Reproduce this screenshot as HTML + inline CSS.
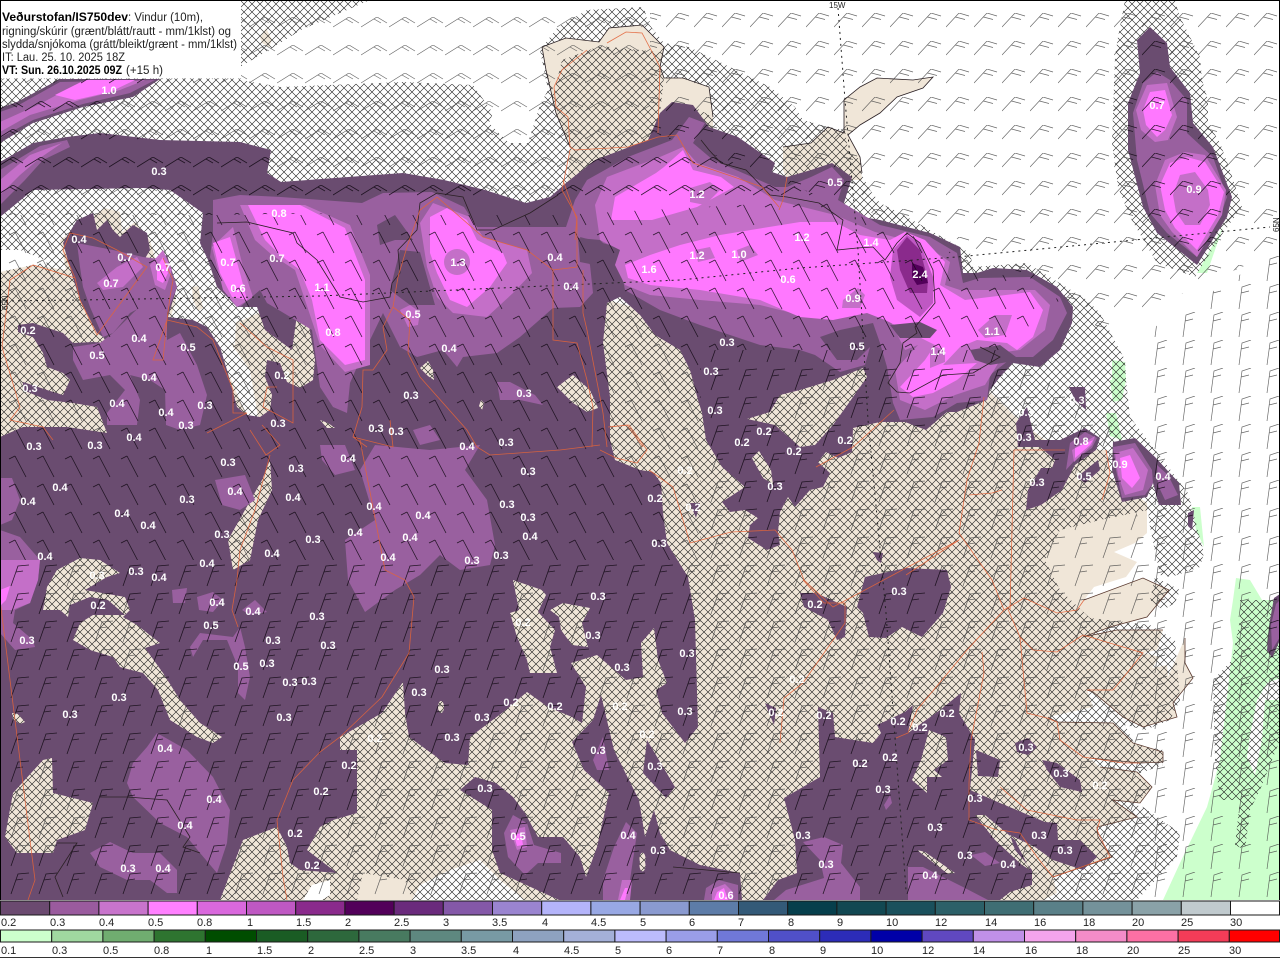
<!DOCTYPE html>
<html><head><meta charset="utf-8"><title>Veðurstofan</title>
<style>html,body{margin:0;padding:0;background:#fff;width:1280px;height:958px;overflow:hidden}svg{display:block}text{font-family:"Liberation Sans",sans-serif}</style></head>
<body>
<svg width="1280" height="958" viewBox="0 0 1280 958" xmlns="http://www.w3.org/2000/svg">
<defs>
<pattern id="h" width="8" height="8" patternUnits="userSpaceOnUse"><path d="M0 0L8 8M8 0L0 8" stroke="#1a1a1a" stroke-width=".6" fill="none"/></pattern>
<pattern id="bA" x="22" y="13" width="28" height="28" patternUnits="userSpaceOnUse"><path d="M0 14L13 0L23 3M9.500 4L19 6.500" stroke="#444" stroke-width=".7" fill="none"/></pattern>
<pattern id="bB" x="25" y="17" width="28" height="28" patternUnits="userSpaceOnUse"><path d="M0 10L16 0L26 6M13 2L20 6" stroke="#444" stroke-width=".7" fill="none"/></pattern>
<pattern id="bC" x="8" y="6" width="28" height="28" patternUnits="userSpaceOnUse"><path d="M7 2L18 23M7 2L1 5" stroke="#444" stroke-width=".7" fill="none"/></pattern>
<pattern id="bE" x="10" y="4" width="28" height="28" patternUnits="userSpaceOnUse"><path d="M1 22L8 2L19 1M6 8L13 7" stroke="#444" stroke-width=".7" fill="none"/></pattern>
<pattern id="bG" x="4" y="4" width="28" height="28" patternUnits="userSpaceOnUse"><path d="M3 25L6 3L15 0M5 9L13 7" stroke="#444" stroke-width=".7" fill="none"/></pattern>
<pattern id="dA" x="22" y="13" width="28" height="28" patternUnits="userSpaceOnUse"><path d="M0 14L13 0L23 3M9.500 4L19 6.500" stroke="#120a14" stroke-width=".8" fill="none"/></pattern>
<pattern id="dB" x="25" y="17" width="28" height="28" patternUnits="userSpaceOnUse"><path d="M0 10L16 0L26 6M13 2L20 6" stroke="#120a14" stroke-width=".8" fill="none"/></pattern>
<pattern id="dC" x="8" y="6" width="28" height="28" patternUnits="userSpaceOnUse"><path d="M7 2L18 23M7 2L1 5" stroke="#120a14" stroke-width=".8" fill="none"/></pattern>
<pattern id="dE" x="10" y="4" width="28" height="28" patternUnits="userSpaceOnUse"><path d="M1 22L8 2L19 1M6 8L13 7" stroke="#120a14" stroke-width=".8" fill="none"/></pattern>
<pattern id="dG" x="4" y="4" width="28" height="28" patternUnits="userSpaceOnUse"><path d="M3 25L6 3L15 0M5 9L13 7" stroke="#120a14" stroke-width=".8" fill="none"/></pattern>
<path id="pu" fill-rule="evenodd" clip-rule="evenodd" d="M0 162L33 143L67 137L100 133L160 140L240 142L271 150L267 173L281 182L403 173L444 180L485 190L526 203L550 197L566 183L595 160L648 140L660 113L672 102L693 105L709 127L738 137L775 163L772 172L787 177L811 170L832 163L852 177L844 203L840 213L880 220L930 233L960 247L963 273L977 273L993 268L1027 270L1057 287L1073 307L1072 323L1060 350L1040 367L1013 363L1000 377L990 390L987 400L957 412L947 412L926 430L905 422L880 422L853 428L852 452L838 458L826 452L818 462L830 473L823 487L810 490L795 507L788 497L780 512L778 532L780 545L767 550L748 538L750 525L758 518L745 510L730 512L722 502L745 487L722 467L706 440L702 413L698 400L690 370L680 350L655 335L640 315L620 297L607 303L603 343L610 397L610 440L615 460L640 470L653 472L661 483L663 513L667 543L688 577L695 620L698 727L685 743L662 713L656 690L667 683L658 660L654 628L641 643L643 677L626 680L597 655L571 663L586 687L582 723L572 717L548 707L527 692L502 713L470 737L468 765L445 763L409 737L405 713L403 682L382 713L340 737L340 750L357 750L357 813L333 820L320 827L307 850L337 873L300 870L290 863L287 847L277 827L243 840L220 900L0 900L0 437L23 427L67 427L107 433L97 407L73 403L47 400L23 390L23 382L47 390L63 395L70 380L63 373L47 367L43 353L33 337L18 332L18 325L33 323L63 333L73 343L93 342L107 343L103 337L97 333L80 300L73 278L63 243L77 220L93 213L97 230L107 220L113 230L120 237L133 225L147 233L150 250L143 262L167 255L177 287L168 317L193 320L207 327L220 347L227 370L237 407L247 415L260 417L270 410L272 395L265 377L267 360L280 363L287 382L300 388L313 380L315 360L307 315L297 315L292 350L265 330L257 307L237 307L217 287L208 260L200 243L203 213L170 190L143 188L33 190L0 217Z
M47 587L57 570L80 558L100 560L120 573L107 577L85 590L125 597L130 610L123 617L137 625L160 643L145 648L163 673L180 700L200 723L222 737L213 743L197 737L170 720L158 690L143 673L120 667L113 657L90 650L73 640L80 623L93 615L125 615L108 600L90 597L70 605L68 617L60 610L43 610Z
M13 793L43 760L52 758L53 793L93 803L85 830L57 840L53 853L17 853L5 837Z
M12 713L18 714L25 722L20 724L13 719Z
M233 570L228 540L245 510L262 480L270 460L272 490L258 520L250 560Z
M420 368L428 361L433 370L434 380L428 376Z
M557 387L573 375L590 390L598 408L587 412L573 403Z
M481 400L484 403L482 410L479 406Z
M513 580L542 590L546 595L538 612L555 630L550 647L557 673L530 673L527 660L517 637L510 613L519 610Z
M550 610L563 603L590 608L582 623L588 647L572 645L561 630L559 617Z
M438 707A3 6 0 1 0 444 707A3 6 0 1 0 438 707Z
M320 420L328 423L335 428L327 428Z
M747 419L770 412L780 395L800 390L833 380L863 368L867 377L853 397L833 425L815 445L800 447L775 425Z
M752 458L759 451L771 470L773 484L763 478Z
M601 695L614 750L639 800L645 837L654 810L660 833L670 850L700 865L740 873L742 900H559L500 873L492 850L492 810L460 790L475 777L496 783L513 797L525 813L538 837L563 837L580 857L586 877L597 847L609 793L584 770L572 742L593 720Z
M640 862A3 6 0 1 0 645 862A3 6 0 1 0 640 862Z
M647 740L675 787L666 798L643 773Z
M763 900L778 880L797 873L795 840L784 798L820 777L818 707L833 713L835 737L873 743L881 733L877 725L905 712L913 705L908 733L940 710L961 693L959 713L975 740L970 790L1000 803L1045 822L1057 823L1058 840L1080 840L1097 857L1083 870L1053 860L1035 847L1010 835L1015 850L1032 870L1032 885L1010 892L1000 900Z
M921 760L929 730L946 737L948 760L934 770L942 777L927 777L927 793L912 780Z
M976 750L1000 760L998 777L978 776Z
M917 850L925 852L955 873L948 874Z
M975 815L985 815L1015 840L1030 870L1022 865L995 840Z
M865 577L906 568L947 570L951 587L943 613L922 637L902 627L886 638L869 637L863 613L857 607Z
M800 593L816 593L847 607L845 637L837 640L828 620L804 607Z
M873 552L883 553L881 563L877 560Z
M690 503L700 503L696 518Z
M765 703L776 708L774 725Z
M1015 743L1028 738L1037 747L1028 755L1017 752Z
M1042 760L1057 763L1080 780L1082 792L1060 787L1047 770Z
M1016 423L1027 407L1030 420L1035 440L1060 440L1085 428L1100 438L1096 450L1075 465L1062 490L1041 505L1026 510L1028 490L1041 468L1052 468L1055 460L1040 447L1018 447Z
M1077 477L1098 460L1100 470L1085 483Z
M1113 442L1135 438L1155 457L1179 483L1181 505L1159 505L1153 483L1147 497L1122 502L1112 470Z
M1069 387L1085 387L1086 410L1075 400Z
M1188 513L1194 510L1192 530L1188 526Z
M1150 27L1167 43L1170 67L1190 93L1193 123L1213 147L1232 197L1227 217L1197 265L1157 233L1143 207L1128 150L1128 103L1140 73L1137 40Z
M0 108L17 102L60 79H160L133 97L83 107L33 123L0 143Z
M1274 598L1280 594V640L1272 658L1267 650L1270 620Z"/>
<clipPath id="cp"><use href="#pu"/></clipPath>
</defs>
<rect width="1280" height="958" fill="#fff"/>
<!-- green -->
<path d="M1230 620L1233 600L1236 578L1250 580L1262 600L1280 600V900H1163L1180 863L1207 807L1220 760L1233 643Z" fill="#ccffcc"/>
<path d="M1247 757L1250 735L1257 700L1267 683L1280 678V700L1265 700L1262 740L1255 775Z" fill="#fff"/>
<path d="M1110 380H1126L1122 400L1113 402ZM1106 413L1116 413L1122 440L1110 436ZM1192 507H1200L1204 547L1196 530ZM1197 273L1223 227L1215 250L1207 273ZM1112 360L1125 362L1126 382L1112 382Z" fill="#ccffcc"/>
<!-- land -->
<path d="M0 272L33 265L66 270L60 240L105 208L120 212L122 232L135 222L150 240L155 258L170 262L176 300L170 320L207 327L235 345L236 322L243 320L265 310L310 300L420 300L607 300L720 330L900 360L988 390L1020 421L1057 449L1106 450L1110 477L1147 503L1147 533L1135 543L1114 552L1137 562L1126 577L1094 587L1084 600L1143 578L1169 590L1147 617L1110 627L1083 637L1117 630L1163 630L1157 650L1143 653L1160 657L1152 668L1167 665L1168 677L1185 638L1185 663L1193 678L1173 703L1177 717L1143 727L1123 717L1093 692L1087 690L1093 707L1048 717L1057 722L1113 723L1133 743L1163 752L1163 762L1140 763L1090 758L1100 767L1137 772L1152 787L1140 803L1113 800L1137 817L1097 827L1098 837L1112 857L1053 877L1057 893L1043 900L0 900Z" fill="#f0e6d8"/>
<path d="M542 47L566 38L599 42L609 28L642 25L664 47L660 67L664 78L683 78L709 87L713 117L713 150L566 200L570 147L556 113L546 70Z" fill="#f0e6d8"/>
<path d="M783 147L811 143L828 127L844 133L844 100L860 87L877 78L913 80L933 77L923 88L897 97L880 113L860 125L848 135L860 157L862 180L787 180L783 170Z" fill="#f0e6d8"/>
<path d="M192 287L198 286L203 308L198 311L193 300ZM260 38L266 28L272 40L269 47L262 43Z" fill="#f0e6d8"/>
<!-- sea inside land -->
<path d="M170 262L200 230L210 250L236 318L232 345L250 370L258 417L247 417L227 370L220 347L207 327L193 320L170 320L176 300Z" fill="#fff"/>
<path d="M192 287L198 286L203 308L198 311L193 300Z" fill="#f0e6d8"/>
<path d="M412 900L420 885L450 870L480 860L500 880L525 900Z" fill="#fff"/>
<!-- hatch -->
<path d="M240 0H370L301 30L269 50L240 67Z" fill="url(#h)"/>
<path d="M0 78H240V80L281 87L403 82L473 85L493 113L489 123L509 143L528 143L540 105L548 90L540 50L558 27L587 10L644 7L648 23L664 43L689 47L730 67L770 87L795 107L803 120L828 127L845 130L848 150L860 160L862 175L870 190L880 203L900 213L970 253L973 267L1027 263L1087 300L1100 313L1125 360L1126 380L1130 417L1188 493L1204 553L1200 567L1171 577L1160 575L1150 527L1148 510L1100 520L1060 530L1045 560L1060 590L1090 618L1150 625L1175 640L1180 700L1170 720L1145 730L1125 725L1135 745L1163 750L1163 765L1135 775L1152 787L1135 805L1143 807L1180 833L1177 857L1137 900H525L412 900L405 880L363 873L357 900H0V272L33 265L50 262L20 250L0 250Z" fill="url(#h)"/>
<path d="M1155 577L1180 590L1175 603L1163 610L1150 600Z" fill="url(#h)"/>
<path d="M1125 0H1175L1180 17L1200 57L1202 80L1208 100L1208 123L1220 143L1230 170L1242 207L1223 233L1195 277L1157 263L1130 217L1118 187L1112 143L1115 57L1118 37Z" fill="url(#h)"/>
<path d="M1213 680L1232 660L1240 620L1240 600H1280V740L1260 790L1250 810L1245 850L1235 845L1240 800L1220 800L1215 760Z" fill="url(#h)"/>
<path d="M303 900L312 885L330 880L330 895L322 900Z" fill="#fff"/>
<path d="M542 47L566 38L599 42L609 28L642 25L664 47L660 52L600 46L562 60L554 92L546 70ZM664 78L683 78L709 87L713 117L690 105L672 102L660 113Z" fill="#f0e6d8"/>
<!-- gray barbs -->
<g opacity=".8">
<path d="M650 0H1280V250L1100 330L1070 300L960 240L830 200L650 130Z" fill="url(#bA)"/>
<path d="M240 0H650V130L830 200L560 210L200 215L0 215V78H240Z" fill="url(#bB)"/>
<path d="M0 215H560L830 200L1060 300L1000 350H700V560H0Z" fill="url(#bC)"/>
<path d="M0 560H700V350H1000L1110 420L1150 560V900H0Z" fill="url(#bE)"/>
<path d="M1150 330L1280 250V900H1150Z" fill="url(#bG)"/>
</g>
<!-- base purple -->
<use href="#pu" fill="#6a4c70"/>
<!-- mid -->
<g fill="#99609f">
<path d="M213 200L240 195L281 197L362 203L383 193L432 192L464 207L477 227L566 227L575 200L587 180L628 157L672 140L689 117L705 123L693 143L713 160L775 187L787 187L811 177L832 167L844 180L838 200L880 225L930 237L957 253L963 283L980 278L1030 277L1060 297L1067 313L1053 340L1033 357L1013 357L990 375L987 400L957 403L933 417L900 420L893 403L887 367L880 343L873 323L840 330L820 337L837 360L857 360L870 347L865 365L840 372L815 355L800 350L760 345L700 325L660 310L625 290L620 265L640 240L610 245L580 237L590 265L593 293L580 307L553 308L520 337L497 353L463 357L457 367L443 350L417 357L400 347L383 313L357 367L350 383L347 413L333 407L320 387L312 330L267 303L260 290L240 307L220 280L210 257L213 233Z"/>
<path d="M77 243L113 250L143 257L167 260L177 287L167 313L160 297L130 313L113 333L103 337L90 307L83 287L80 267Z"/>
<path d="M73 347L100 343L113 333L133 313L150 297L167 300L167 340L180 333L197 365L207 395L200 425L180 430L166 425L165 390L150 380L130 375L140 400L137 425L107 425L107 413L125 390L110 375L83 380L73 360Z"/>
<path d="M375 445L430 450L480 445L465 470L487 500L495 545L490 565L460 570L440 555L420 575L395 590L365 612L348 580L345 540L375 520L360 470Z"/>
<path d="M320 445L345 445L355 470L335 475L322 460ZM215 480L245 475L255 500L240 510L222 505ZM497 382L510 382L535 395L543 405L520 400L500 400ZM460 550L478 552L482 566L464 566ZM413 430L430 425L440 440L420 445Z"/>
<path d="M0 478L12 478L20 500L12 520L0 525ZM0 530L20 537L40 560L38 580L30 603L15 610L13 623L33 640L35 647L15 650L0 633Z"/>
<path d="M172 590L187 588L185 603L173 603ZM197 597L213 592L223 600L213 612L199 610ZM242 610L255 600L267 612L250 615ZM190 647L200 633L233 637L240 627L245 647L250 677L245 700L238 693L238 667L227 640L203 640L193 657Z"/>
<path d="M147 747L157 733L187 750L213 777L230 810L227 843L217 873L200 853L187 837L160 823L133 797L127 783L133 763Z"/>
<path d="M90 853L110 842L133 853L160 853L177 870L177 893L167 893L150 880L127 880L100 867Z"/>
<path d="M593 760L603 737L609 770L597 770ZM504 833L513 815L527 823L534 845L561 853L561 863L538 863L525 875L508 857ZM614 847L626 822L637 833L630 880L630 900L603 900L603 880ZM706 888L719 880L738 885L738 900H704ZM803 842L824 837L843 845L841 863L860 887L860 900H774L786 890L824 878L820 860ZM908 867L923 867L963 887L988 900H908ZM971 855L985 852L1000 863L985 866ZM884 805L890 795L892 803L886 810Z"/>
<path d="M0 112L17 106L60 82L155 80L130 93L83 104L33 120L0 138ZM0 170L40 146L67 140L70 147L43 160L25 180L0 205Z"/>
<path d="M1133 113L1143 83L1157 72L1170 80L1187 100L1187 133L1213 157L1227 197L1220 217L1197 257L1167 233L1150 213L1137 160Z"/>
<path d="M1070 443L1085 432L1097 438L1092 448L1075 460L1066 470ZM1113 447L1135 443L1152 470L1153 483L1145 495L1122 498L1116 470ZM1157 465L1168 475L1178 495L1165 500L1158 485Z"/>
<path d="M1276 604L1280 600V637L1272 650L1271 625Z"/>
</g>
<!-- light -->
<g fill="#c46fc8">
<path d="M212 247L233 227L243 267L253 297L237 307L223 290Z"/>
<path d="M240 205L305 205L350 225L370 275L370 365L345 372L320 345L305 300L295 270L272 255L255 240Z"/>
<path d="M420 223L433 203L470 217L483 237L527 250L532 273L513 293L487 317L453 313L437 297L427 267Z"/>
<path d="M400 310L410 305L420 312L418 325L408 327Z"/>
<path d="M595 205L607 177L660 157L683 147L697 163L738 177L775 200L835 215L875 232L925 245L950 262L945 285L960 290L1035 290L1050 305L1045 330L1020 350L1005 352L985 385L955 395L925 410L900 400L895 370L918 345L905 350L890 320L880 300L833 320L800 315L760 305L700 300L650 295L625 285L615 265L620 250L600 240Z"/>
<path d="M97 283L117 267L137 257L143 267L123 287L103 290Z"/>
<path d="M150 265L163 250L172 270L165 290L155 285Z"/>
<path d="M0 560H40L38 580L30 603L12 610L0 610ZM510 830L525 827L527 847L517 850ZM622 880L632 880L630 900H618ZM712 889L725 884L733 892L733 900H712Z"/>
<path d="M1136 110L1147 85L1167 83L1177 117L1168 140L1155 142L1141 130ZM1155 185L1165 160L1185 152L1205 155L1226 190L1222 215L1197 257L1172 232L1160 215Z"/>
<path d="M0 122L40 104L75 85L145 80L120 90L80 100L30 115L0 132ZM0 180L30 155L62 143L40 158L20 175L0 195Z"/>
<path d="M1072 450L1095 436L1092 445L1074 462ZM1115 453L1133 448L1148 470L1143 490L1125 495L1118 475Z"/>
</g>
<!-- bright -->
<g fill="#ff78ff">
<path d="M213 243L230 237L240 273L247 300L232 297L220 273Z"/>
<path d="M248 205L300 205L345 228L365 280L365 360L345 365L320 340L312 300L300 270L280 255L265 240Z"/>
<path d="M430 217L447 208L467 220L477 240L503 253L507 263L497 277L490 287L467 307L450 300L437 273L430 253Z"/>
<path d="M664 167L683 150L693 170L721 177L734 187L697 207L652 220L611 220L615 197L656 173Z"/>
<path d="M625 265L650 255L680 245L720 235L800 222L835 222L860 235L890 240L905 232L925 240L945 262L940 285L965 300L1030 292L1043 310L1033 337L1017 350L1007 343L977 340L960 347L943 365L977 363L957 380L933 393L913 397L900 387L925 360L935 345L885 320L867 313L833 320L800 317L760 300L700 290L650 285L628 278Z"/>
<path d="M157 267L163 257L168 273L163 283L157 280Z"/>
<path d="M0 590L10 586L6 600L0 606ZM514 835L521 833L523 845L517 846Z"/>
<path d="M1143 110L1150 92L1165 90L1172 115L1165 130L1157 137L1146 125ZM1160 185L1170 163L1187 157L1205 162L1224 192L1218 215L1197 250L1175 228L1165 210Z"/>
<path d="M55 95L85 80L135 80L110 92L75 100ZM1075 448L1093 440L1090 445L1075 458ZM1120 458L1130 455L1140 478L1132 488L1122 478ZM625 888L628 888L625 900H620ZM717 892L724 888L728 900H714Z"/>
</g>
<!-- inner spots -->
<g fill="#c46fc8">
<circle cx="457" cy="262" r="13"/>
<path d="M690 188L710 182L720 190L705 205L690 202ZM737 250L750 245L758 255L740 262ZM843 300L858 288L865 295L860 308L842 308ZM1173 195L1180 175L1195 172L1208 190L1210 205L1200 225L1185 225L1176 212ZM978 330L995 315L1012 315L1005 335L985 338ZM930 345L945 350L945 362L930 368ZM695 250L710 247L715 258L698 262Z"/>
</g>
<g fill="#6a4c70">
<path d="M377 225L395 215L413 240L395 240L380 245ZM400 250L420 252L435 305L410 305L390 290ZM890 325L920 322L937 330L930 338L900 338ZM970 350L1000 345L1020 360L990 365L975 360Z"/>
<path d="M578 238L600 240L608 248L595 265L580 262Z"/>
</g>
<path d="M893 250L907 235L920 243L933 277L933 303L920 317L897 300L890 277Z" fill="#bf58c3"/>
<path d="M897 250L907 237L920 250L928 280L927 293L910 293L900 270Z" fill="#8a2a8c"/>
<path d="M912 263L923 267L928 283L917 285L912 277Z" fill="#52005a"/>
<!-- dark barbs on precipitation -->
<g clip-path="url(#cp)" opacity=".85">
<path d="M650 0H1280V250L1100 330L1070 300L960 240L830 200L650 130Z" fill="url(#dA)"/>
<path d="M240 0H650V130L830 200L560 210L200 215L0 215V78H240Z" fill="url(#dB)"/>
<path d="M0 215H560L830 200L1060 300L1000 350H700V560H0Z" fill="url(#dC)"/>
<path d="M0 560H700V350H1000L1110 420L1150 560V900H0Z" fill="url(#dE)"/>
<path d="M1150 330L1280 250V900H1150Z" fill="url(#dG)"/>
</g>
<!-- dotted graticule -->
<g fill="none" stroke="#222" stroke-width="1" stroke-dasharray="2 4">
<path d="M0 301L80 300L320 296L680 280L800 268L957 257L1270 227"/>
<path d="M838 8L845 100L858 250L868 420L886 613L906 890"/>
</g>
<!-- coast -->
<g fill="none" stroke="#2a2024" stroke-width=".8">
<path d="M542 47L566 38L599 42L609 28L642 25L664 47L660 67L664 78L683 78L709 87L713 117M542 47L546 70L556 113L570 147"/>
<path d="M783 147L811 143L828 127L844 133L844 100L860 87L877 78L913 80L933 77L923 88L897 97L880 113L860 125L848 135L860 157L862 173"/>
<path d="M217 223L247 222L293 233L297 243L317 260L340 297L363 302L390 297L392 283L400 273L398 250L417 230L420 203L437 193L463 197L477 230L493 230L530 213L558 195"/>
<path d="M701 140L709 150L721 163L746 170L770 195L787 197L819 203L843 220L837 250L857 248L873 247L885 260L897 243L907 233L920 243L933 270L935 303L915 327L917 333L903 343L900 363L888 383L897 392L910 393L943 375L973 373L1000 357L980 347"/>
<path d="M100 797L127 797L167 800L190 837L183 847L200 853M57 843L77 843L55 877L63 897M673 867L740 873"/>
<path d="M1083 637L1117 630L1163 630M1084 600L1143 578L1169 590L1147 617L1110 627L1083 637M1185 638L1185 663L1193 678L1173 703L1177 717L1143 727L1123 717L1093 692L1087 690M1048 717L1057 722L1113 723L1133 743L1163 752L1163 762L1140 763L1090 758M1100 767L1137 772L1152 787L1140 803L1113 800L1137 817L1097 827L1098 837L1112 857L1053 877" stroke="#5a3a30"/>
</g>
<!-- roads -->
<g fill="none" stroke="#e2643a" stroke-width=".8" opacity=".9">
<path d="M607 43L626 32L642 33L660 67L658 133M587 50L562 70L554 87L556 107L568 117L570 147L575 150L628 147L658 137L677 135L693 163L734 177L762 187L779 207M787 177L783 200L779 210M570 150L562 190L577 217L575 240"/>
<path d="M563 180L577 220L577 267L553 270L527 250L483 237L437 197L420 210L407 247L398 277L393 307L383 327L387 350L373 370L363 370L362 407L353 437L367 447M393 307L410 320L408 353L420 377L467 430L477 447L490 455L560 450L600 445M390 420L393 447L353 437M553 270L553 340L577 343L587 380L593 407L592 447M583 270L583 313L587 330L603 413L607 447M610 427L627 425L643 447"/>
<path d="M360 440L385 570L405 580L414 597L409 653L382 697L340 737L320 752L293 780L277 820L283 877L287 900M270 455L255 510L240 550L237 580L232 610L238 627"/>
<path d="M2 347L10 280L33 265L75 278L80 300L97 335L147 267L117 250L93 238L70 233L63 250L75 278M167 320L170 297L173 280L163 258M167 320L153 360L163 360L167 320L197 327L213 340L233 390L233 413L247 413L207 433M2 347L20 407L10 420L43 427L53 440M0 600L35 880L28 900M240 323L267 347L293 360L293 423L263 407L267 387L277 387M250 430L266 455L280 445L262 425"/>
<path d="M608 427L629 425L647 450L637 463L616 458L600 450M649 470L673 487L690 543L731 532L775 530L792 550L804 580L833 607L865 590L906 568L959 540M906 575L959 540M894 410L853 447L816 467M984 397L979 443L967 480L959 533L992 580L1000 600L1004 610L967 650L917 710L908 733L896 738M1014 450L1010 610M1014 450L1065 450M1106 450L1110 473L1102 500M969 495L992 493L1002 490M1004 610L1024 598L1057 613L1077 610L1084 600"/>
<path d="M1007 607L1020 637L1033 650L1057 652L1083 635L1143 653L1123 678L1113 690L1087 690M1020 637L1027 713L1047 718L1057 722L1060 740L1083 757L1123 763L1140 763M1000 787L1027 810L1077 820L1100 820L1097 830L1110 857L1053 877L1037 857L1020 833L1000 830M803 580L824 603L845 603L845 623L803 683L784 698L780 743M982 652L984 673L971 740L969 783L969 820L997 830"/>
</g>
<!-- map labels -->
<g fill="#fff" font-size="11" font-weight="700" text-anchor="middle">
<text x="109" y="94">1.0</text><text x="159" y="175">0.3</text><text x="279" y="217">0.8</text><text x="79" y="243">0.4</text><text x="125" y="261">0.7</text><text x="111" y="287">0.7</text><text x="163" y="271">0.7</text><text x="228" y="266">0.7</text><text x="277" y="262">0.7</text><text x="238" y="292">0.6</text><text x="322" y="291">1.1</text><text x="333" y="336">0.8</text><text x="458" y="266">1.3</text><text x="413" y="318">0.5</text><text x="449" y="352">0.4</text><text x="555" y="261">0.4</text><text x="571" y="290">0.4</text><text x="649" y="273">1.6</text><text x="697" y="198">1.2</text><text x="697" y="259">1.2</text><text x="739" y="258">1.0</text><text x="802" y="241">1.2</text><text x="871" y="246">1.4</text><text x="835" y="186">0.5</text><text x="920" y="278">2.4</text><text x="788" y="283">0.6</text><text x="853" y="302">0.9</text><text x="992" y="335">1.1</text><text x="857" y="350">0.5</text><text x="938" y="355">1.4</text><text x="727" y="346">0.3</text><text x="711" y="375">0.3</text><text x="715" y="414">0.3</text><text x="742" y="446">0.2</text><text x="764" y="435">0.2</text><text x="794" y="455">0.2</text><text x="845" y="444">0.2</text><text x="775" y="490">0.3</text><text x="1157" y="109">0.7</text><text x="1194" y="193">0.9</text>
<text x="28" y="334">0.2</text><text x="97" y="359">0.5</text><text x="139" y="342">0.4</text><text x="188" y="351">0.5</text><text x="30" y="392">0.3</text><text x="149" y="381">0.4</text><text x="117" y="407">0.4</text><text x="166" y="416">0.4</text><text x="205" y="409">0.3</text><text x="186" y="429">0.3</text><text x="134" y="441">0.4</text><text x="34" y="450">0.3</text><text x="95" y="449">0.3</text><text x="228" y="466">0.3</text><text x="282" y="379">0.2</text><text x="278" y="427">0.3</text><text x="411" y="399">0.3</text><text x="376" y="432">0.3</text><text x="396" y="435">0.3</text><text x="348" y="462">0.4</text><text x="296" y="472">0.3</text><text x="467" y="450">0.4</text><text x="506" y="446">0.3</text><text x="524" y="397">0.3</text><text x="528" y="475">0.3</text><text x="60" y="491">0.4</text><text x="28" y="505">0.4</text><text x="187" y="503">0.3</text><text x="235" y="495">0.4</text><text x="293" y="501">0.4</text><text x="374" y="510">0.4</text><text x="423" y="519">0.4</text><text x="507" y="508">0.3</text><text x="528" y="521">0.3</text><text x="122" y="517">0.4</text><text x="148" y="529">0.4</text><text x="222" y="538">0.3</text><text x="313" y="543">0.3</text><text x="355" y="536">0.4</text><text x="410" y="541">0.4</text><text x="530" y="540">0.4</text><text x="501" y="559">0.3</text><text x="272" y="557">0.4</text><text x="388" y="561">0.4</text><text x="472" y="564">0.3</text><text x="45" y="560">0.4</text><text x="207" y="567">0.4</text><text x="97" y="579">0.3</text><text x="136" y="575">0.3</text><text x="159" y="581">0.4</text><text x="217" y="606">0.4</text><text x="98" y="609">0.2</text><text x="253" y="615">0.4</text><text x="598" y="600">0.3</text><text x="317" y="620">0.3</text><text x="211" y="629">0.5</text><text x="523" y="626">0.2</text><text x="593" y="639">0.3</text><text x="27" y="644">0.3</text><text x="273" y="644">0.3</text><text x="328" y="649">0.3</text><text x="267" y="667">0.3</text><text x="241" y="670">0.5</text><text x="622" y="671">0.3</text><text x="442" y="673">0.3</text><text x="687" y="657">0.3</text><text x="290" y="686">0.3</text><text x="309" y="685">0.3</text><text x="419" y="696">0.3</text><text x="119" y="701">0.3</text><text x="511" y="706">0.2</text><text x="555" y="710">0.2</text><text x="620" y="710">0.2</text><text x="685" y="715">0.3</text><text x="70" y="718">0.3</text><text x="284" y="721">0.3</text><text x="482" y="721">0.3</text><text x="647" y="738">0.2</text><text x="452" y="741">0.3</text><text x="375" y="742">0.2</text><text x="598" y="754">0.3</text><text x="165" y="752">0.4</text><text x="655" y="770">0.3</text><text x="349" y="769">0.2</text><text x="214" y="803">0.4</text><text x="485" y="792">0.3</text><text x="321" y="795">0.2</text><text x="185" y="829">0.4</text><text x="295" y="837">0.2</text><text x="518" y="840">0.5</text><text x="628" y="839">0.4</text><text x="658" y="854">0.3</text><text x="312" y="869">0.2</text><text x="128" y="872">0.3</text><text x="163" y="872">0.4</text><text x="726" y="899">0.6</text>
<text x="655" y="502">0.2</text><text x="659" y="547">0.3</text><text x="693" y="511">0.2</text><text x="685" y="474">0.2</text><text x="815" y="608">0.2</text><text x="899" y="595">0.3</text><text x="1024" y="441">0.3</text><text x="1081" y="445">0.8</text><text x="1037" y="486">0.3</text><text x="1084" y="480">0.5</text><text x="1120" y="468">0.9</text><text x="1163" y="480">0.4</text><text x="1026" y="416">0.3</text><text x="1077" y="404">0.3</text><text x="797" y="683">0.2</text><text x="776" y="716">0.2</text><text x="824" y="719">0.2</text><text x="898" y="725">0.2</text><text x="920" y="731">0.2</text><text x="947" y="717">0.2</text><text x="890" y="761">0.2</text><text x="860" y="767">0.2</text><text x="883" y="793">0.3</text><text x="975" y="802">0.3</text><text x="1026" y="751">0.3</text><text x="1061" y="777">0.3</text><text x="1100" y="789">0.2</text><text x="935" y="831">0.3</text><text x="1039" y="839">0.3</text><text x="1065" y="854">0.3</text><text x="803" y="839">0.3</text><text x="826" y="868">0.3</text><text x="965" y="859">0.3</text><text x="1008" y="868">0.4</text><text x="930" y="879">0.4</text>
</g>
<text x="829" y="8" font-size="8" fill="#222">15W</text>
<text transform="translate(1279,232) rotate(-90)" font-size="8" fill="#222">65N</text>
<text transform="translate(8,310) rotate(-90)" font-size="8" fill="#222">65N</text>
<!-- info panel -->
<rect x="0" y="0" width="241" height="78.500" fill="#fff"/>
<g font-size="11.500" fill="#222">
<text x="2" y="21" font-size="12" font-weight="700" fill="#000" textLength="126" lengthAdjust="spacingAndGlyphs">Veðurstofan/IS750dev</text>
<text x="128" y="21" textLength="75" lengthAdjust="spacingAndGlyphs">: Vindur (10m),</text>
<text x="2" y="35" textLength="229" lengthAdjust="spacingAndGlyphs">rigning/skúrir (grænt/blátt/rautt - mm/1klst) og</text>
<text x="2" y="48" textLength="235" lengthAdjust="spacingAndGlyphs">slydda/snjókoma (grátt/bleikt/grænt - mm/1klst)</text>
<text x="2" y="61" textLength="123" lengthAdjust="spacingAndGlyphs">IT: Lau. 25. 10. 2025 18Z</text>
<text x="2" y="74" font-weight="700" fill="#000" textLength="120" lengthAdjust="spacingAndGlyphs">VT: Sun. 26.10.2025 09Z</text>
<text x="126" y="74" textLength="37" lengthAdjust="spacingAndGlyphs">(+15 h)</text>
</g>
<!-- colorbars -->
<rect x="0" y="900" width="1280" height="58" fill="#fff"/>
<g stroke="#1a1a1a" stroke-width="1">
<rect x=".5" y="901" width="49.200" height="14" fill="#6b4a70"/><rect x="49.700" y="901" width="49.200" height="14" fill="#9a5b9e"/><rect x="98.900" y="901" width="49.200" height="14" fill="#c874cc"/><rect x="148.100" y="901" width="49.200" height="14" fill="#ff80ff"/><rect x="197.300" y="901" width="49.200" height="14" fill="#d968dd"/><rect x="246.500" y="901" width="49.200" height="14" fill="#bf58c3"/><rect x="295.700" y="901" width="49.200" height="14" fill="#8a2a8c"/><rect x="344.900" y="901" width="49.200" height="14" fill="#52005a"/><rect x="394.100" y="901" width="49.200" height="14" fill="#6a2a7c"/><rect x="443.300" y="901" width="49.200" height="14" fill="#8458a8"/><rect x="492.500" y="901" width="49.200" height="14" fill="#9a84d0"/><rect x="541.700" y="901" width="49.200" height="14" fill="#b4b4fa"/><rect x="590.900" y="901" width="49.200" height="14" fill="#98a8e4"/><rect x="640.100" y="901" width="49.200" height="14" fill="#8a9ad0"/><rect x="689.300" y="901" width="49.200" height="14" fill="#5d7ca8"/><rect x="738.500" y="901" width="49.200" height="14" fill="#335a78"/><rect x="787.700" y="901" width="49.200" height="14" fill="#063f4c"/><rect x="836.900" y="901" width="49.200" height="14" fill="#124852"/><rect x="886.100" y="901" width="49.200" height="14" fill="#1a505c"/><rect x="935.300" y="901" width="49.200" height="14" fill="#2c6068"/><rect x="984.500" y="901" width="49.200" height="14" fill="#3f6e74"/><rect x="1033.700" y="901" width="49.200" height="14" fill="#5a8088"/><rect x="1082.900" y="901" width="49.200" height="14" fill="#74929a"/><rect x="1132.100" y="901" width="49.200" height="14" fill="#8aa2a8"/><rect x="1181.300" y="901" width="49.200" height="14" fill="#c0cace"/><rect x="1230.500" y="901" width="49" height="14" fill="#fff"/>
<rect x=".5" y="930" width="51.200" height="12" fill="#ccffcc"/><rect x="51.700" y="930" width="51.200" height="12" fill="#a0d8a0"/><rect x="102.900" y="930" width="51.200" height="12" fill="#70ad70"/><rect x="154.100" y="930" width="51.200" height="12" fill="#2e7430"/><rect x="205.300" y="930" width="51.200" height="12" fill="#004d00"/><rect x="256.500" y="930" width="51.200" height="12" fill="#1a5c24"/><rect x="307.700" y="930" width="51.200" height="12" fill="#2d683c"/><rect x="358.900" y="930" width="51.200" height="12" fill="#487a60"/><rect x="410.100" y="930" width="51.200" height="12" fill="#5e8880"/><rect x="461.300" y="930" width="51.200" height="12" fill="#789aa4"/><rect x="512.500" y="930" width="51.200" height="12" fill="#8ea2c0"/><rect x="563.700" y="930" width="51.200" height="12" fill="#a4b0d8"/><rect x="614.900" y="930" width="51.200" height="12" fill="#bcbcfc"/><rect x="666.100" y="930" width="51.200" height="12" fill="#9a9ee8"/><rect x="717.300" y="930" width="51.200" height="12" fill="#7078d8"/><rect x="768.500" y="930" width="51.200" height="12" fill="#5050c8"/><rect x="819.700" y="930" width="51.200" height="12" fill="#2c2cb8"/><rect x="870.900" y="930" width="51.200" height="12" fill="#0000a8"/><rect x="922.100" y="930" width="51.200" height="12" fill="#6048c0"/><rect x="973.300" y="930" width="51.200" height="12" fill="#c090e8"/><rect x="1024.500" y="930" width="51.200" height="12" fill="#f4a4ec"/><rect x="1075.700" y="930" width="51.200" height="12" fill="#f48cc8"/><rect x="1126.900" y="930" width="51.200" height="12" fill="#fc70a4"/><rect x="1178.100" y="930" width="51.200" height="12" fill="#f43c58"/><rect x="1229.300" y="930" width="50.200" height="12" fill="#ff0000"/>
</g>
<g font-size="11" fill="#222">
<text x="1" y="926">0.2</text><text x="50" y="926">0.3</text><text x="99" y="926">0.4</text><text x="148" y="926">0.5</text><text x="197" y="926">0.8</text><text x="247" y="926">1</text><text x="296" y="926">1.5</text><text x="345" y="926">2</text><text x="394" y="926">2.5</text><text x="443" y="926">3</text><text x="492" y="926">3.5</text><text x="542" y="926">4</text><text x="591" y="926">4.5</text><text x="640" y="926">5</text><text x="689" y="926">6</text><text x="738" y="926">7</text><text x="788" y="926">8</text><text x="837" y="926">9</text><text x="886" y="926">10</text><text x="935" y="926">12</text><text x="985" y="926">14</text><text x="1034" y="926">16</text><text x="1083" y="926">18</text><text x="1132" y="926">20</text><text x="1181" y="926">25</text><text x="1230" y="926">30</text>
<text x="1" y="954">0.1</text><text x="52" y="954">0.3</text><text x="103" y="954">0.5</text><text x="154" y="954">0.8</text><text x="206" y="954">1</text><text x="257" y="954">1.5</text><text x="308" y="954">2</text><text x="359" y="954">2.5</text><text x="410" y="954">3</text><text x="461" y="954">3.5</text><text x="513" y="954">4</text><text x="564" y="954">4.5</text><text x="615" y="954">5</text><text x="666" y="954">6</text><text x="717" y="954">7</text><text x="769" y="954">8</text><text x="820" y="954">9</text><text x="871" y="954">10</text><text x="922" y="954">12</text><text x="973" y="954">14</text><text x="1025" y="954">16</text><text x="1076" y="954">18</text><text x="1127" y="954">20</text><text x="1178" y="954">25</text><text x="1229" y="954">30</text>
</g>
<path d="M0 957.500H1280" stroke="#333" stroke-width="1"/>
<!-- frame -->
<path d="M0 .5H1280M.5 0V900M1279.500 0V900" stroke="#000" stroke-width="1" fill="none"/>
</svg>
</body></html>
